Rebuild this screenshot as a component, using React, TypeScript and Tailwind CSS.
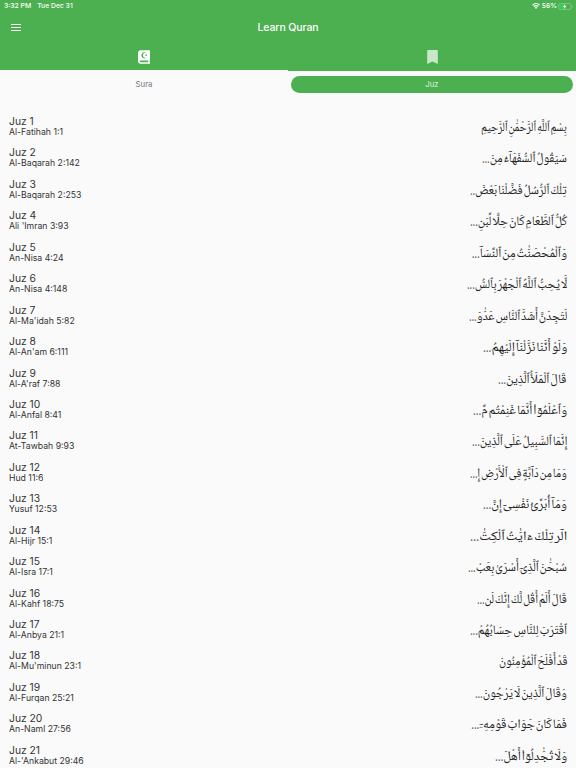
import { useLayoutEffect, useRef, useState } from 'react';
import { FaQuran } from 'react-icons/fa';

interface JuzItem {
  id: number;
  start: string;
  verse: string;
  dots?: string;
  width: number;
}

const juzList: JuzItem[] = [
  { id: 1, start: 'Al-Fatihah 1:1', verse: 'بِسْمِ ٱللَّهِ ٱلرَّحْمَٰنِ ٱلرَّحِيمِ', width: 86 },
  { id: 2, start: 'Al-Baqarah 2:142', verse: 'سَيَقُولُ ٱلسُّفَهَآءُ مِنَ', dots: '...', width: 85 },
  { id: 3, start: 'Al-Baqarah 2:253', verse: 'تِلْكَ ٱلرُّسُلُ فَضَّلْنَا بَعْضَ', dots: '..', width: 97 },
  { id: 4, start: "Ali 'Imran 3:93", verse: 'كُلُّ ٱلطَّعَامِ كَانَ حِلًّا لِّبَنِ', dots: '...', width: 97 },
  { id: 5, start: 'An-Nisa 4:24', verse: 'وَٱلْمُحْصَنَٰتُ مِنَ ٱلنِّسَآ', dots: '...', width: 95 },
  { id: 6, start: 'An-Nisa 4:148', verse: 'لَّا يُحِبُّ ٱللَّهُ ٱلْجَهْرَ بِٱلسُّ', dots: '...', width: 100 },
  { id: 7, start: "Al-Ma'idah 5:82", verse: 'لَتَجِدَنَّ أَشَدَّ ٱلنَّاسِ عَدَٰوَ', dots: '...', width: 98 },
  { id: 8, start: "Al-An'am 6:111", verse: 'وَلَوْ أَنَّنَا نَزَّلْنَآ إِلَيْهِمُ', dots: '...', width: 84 },
  { id: 9, start: "Al-A'raf 7:88", verse: 'قَالَ ٱلْمَلَأُ ٱلَّذِينَ', dots: '...', width: 69 },
  { id: 10, start: 'Al-Anfal 8:41', verse: 'وَٱعْلَمُوٓا۟ أَنَّمَا غَنِمْتُم مِّ', dots: '...', width: 94 },
  { id: 11, start: 'At-Tawbah 9:93', verse: 'إِنَّمَا ٱلسَّبِيلُ عَلَى ٱلَّذِينَ', dots: '...', width: 95 },
  { id: 12, start: 'Hud 11:6', verse: 'وَمَا مِن دَآبَّةٍ فِى ٱلْأَرْضِ إِ', dots: '...', width: 97 },
  { id: 13, start: 'Yusuf 12:53', verse: 'وَمَآ أُبَرِّئُ نَفْسِىٓ إِنَّ', dots: '...', width: 84 },
  { id: 14, start: 'Al-Hijr 15:1', verse: 'الٓر تِلْكَ ءَايَٰتُ ٱلْكِتَٰ', dots: '...', width: 97 },
  { id: 15, start: 'Al-Isra 17:1', verse: 'سُبْحَٰنَ ٱلَّذِىٓ أَسْرَىٰ بِعَبْ', dots: '...', width: 99 },
  { id: 16, start: 'Al-Kahf 18:75', verse: 'قَالَ أَلَمْ أَقُل لَّكَ إِنَّكَ لَن', dots: '...', width: 90 },
  { id: 17, start: 'Al-Anbya 21:1', verse: 'ٱقْتَرَبَ لِلنَّاسِ حِسَابُهُمْ', dots: '...', width: 97 },
  { id: 18, start: "Al-Mu'minun 23:1", verse: 'قَدْ أَفْلَحَ ٱلْمُؤْمِنُونَ', width: 69 },
  { id: 19, start: 'Al-Furqan 25:21', verse: 'وَقَالَ ٱلَّذِينَ لَا يَرْجُونَ', dots: '...', width: 92 },
  { id: 20, start: 'An-Naml 27:56', verse: 'فَمَا كَانَ جَوَابَ قَوْمِهِۦٓ', dots: '...', width: 96 },
  { id: 21, start: "Al-'Ankabut 29:46", verse: 'وَلَا تُجَٰدِلُوٓا۟ أَهْلَ', dots: '...', width: 72 },
];

function StatusBar() {
  return (
    <div className="flex h-3 items-center justify-between pl-1 pr-[3px] text-[6.8px] font-medium leading-3 text-white">
      <div className="flex gap-[6px]">
        <span>3:32 PM</span>
        <span>Tue Dec 31</span>
      </div>
      <div className="flex items-center">
        <svg className="mr-[2px] h-[6px] w-2" viewBox="0 0 16 12" fill="none" stroke="white" strokeWidth="2.6">
          <path d="M1 4.2a10 10 0 0 1 14 0M3.6 7a6.2 6.2 0 0 1 8.8 0" />
          <path d="M8 12 5.5 9.3a3.5 3.5 0 0 1 5 0z" fill="white" stroke="none" />
        </svg>
        <span>56%</span>
        <svg className="ml-[1px] h-[7px] w-[15px]" viewBox="0 0 30 14" fill="none">
          <rect x="1" y="1" width="25" height="12" rx="3.5" stroke="white" strokeOpacity=".5" />
          <rect x="2.5" y="2.5" width="12" height="9" rx="2" fill="#30d158" />
          <path d="M28 5v4c1.6-.6 1.6-3.4 0-4z" fill="white" fillOpacity=".5" />
          <path d="m14.5 1.5-4.5 6.5h3l-1 4.5 5-6.5h-3z" fill="white" />
        </svg>
      </div>
    </div>
  );
}

function Header() {
  return (
    <header className="h-[70px] bg-[#4caf50]">
      <StatusBar />
      <div className="grid h-[31px] grid-cols-3 items-center px-[11px]">
        <svg className="h-[7px] w-[10px]" viewBox="0 0 10 7" fill="white">
          <path d="M0 0h10v1H0zM0 3h10v1H0zM0 6h10v1H0z" />
        </svg>
        <h1 className="text-center text-[10.5px] font-medium leading-4 tracking-[-0.1px] text-white">
          Learn Quran
        </h1>
      </div>
      <div className="grid h-7 grid-cols-2 place-items-center">
        <FaQuran className="h-[14px] w-[12px] text-white" />
        <svg className="h-[14px] w-[11px] text-white/70" viewBox="0 0 11 14" fill="currentColor">
          <path d="M.8 0h9.4q.6 0 .6.7V14L5.5 11.5.2 14V.7Q.2 0 .8 0z" />
        </svg>
      </div>
    </header>
  );
}

function Tabs() {
  return (
    <nav className="grid h-7 grid-cols-2 text-center text-[7.8px] leading-[17px]">
      <button className="pt-[6px] pb-[5px] text-[#777]">Sura</button>
      <div className="border-t border-[#4caf50] px-[3px] pt-[5px]">
        <button className="block h-[17px] w-full rounded-full bg-[#4caf50] text-white/80">Juz</button>
      </div>
    </nav>
  );
}

// Opening words of the juz, condensed or stretched to the given width
function Verse({ text, dots, width }: { text: string; dots?: string; width: number }) {
  const ref = useRef<HTMLParagraphElement>(null);
  const [scale, setScale] = useState(1);

  useLayoutEffect(() => {
    if (ref.current) setScale(width / ref.current.offsetWidth);
  }, [width]);

  return (
    <p
      ref={ref}
      dir="rtl"
      lang="ar"
      style={{ transform: `scaleX(${scale})` }}
      className="h-6 origin-right whitespace-nowrap font-['Noto_Naskh_Arabic','DejaVu_Sans',serif] text-[13px] leading-6 text-[#222] [word-spacing:-2px]"
    >
      {text}
      {dots && <span className="tracking-[2px]">{dots}</span>}
    </p>
  );
}

function JuzRow({ item }: { item: JuzItem }) {
  return (
    <li className="flex h-[31.45px] justify-between px-[9px]">
      <div className="pt-[3px] text-[#333]">
        <p className="text-[10.3px] leading-[12px]">Juz {item.id}</p>
        <p className="text-[8.7px] leading-[10px]">{item.start}</p>
      </div>
      <div className="pt-[4px]">
        <Verse text={item.verse} dots={item.dots} width={item.width} />
      </div>
    </li>
  );
}

export default function App() {
  return (
    <div className="h-[768px] w-[576px] overflow-hidden bg-[#fafafa] font-['Inter',sans-serif]">
      <Header />
      <Tabs />
      <ul className="pt-[14px]">
        {juzList.map((item) => (
          <JuzRow key={item.id} item={item} />
        ))}
      </ul>
    </div>
  );
}
